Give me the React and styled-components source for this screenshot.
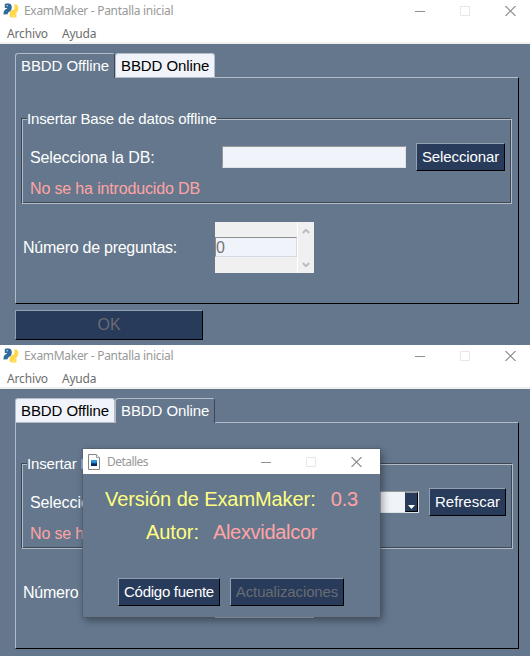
import React from "react";
import styled, { createGlobalStyle } from "styled-components";

const slate = "#64778d";
const field = "#f0f3f9";
const navy = "#283b5b";
const light = "#b2bbc6";
const dark = "#3d4854";

const GlobalStyle = createGlobalStyle`
  *, *::before, *::after { box-sizing: border-box; }
  body {
    margin: 0;
    background: #fff;
    overflow: hidden;
    font-family: "Liberation Sans", Arial, sans-serif;
  }
`;

const Screen = styled.main`
  position: relative;
  width: 530px;
  height: 657px;
  overflow: hidden;
`;

const WindowFrame = styled.section`
  display: flex;
  flex-direction: column;
  height: ${(p) => p.$height}px;
  overflow: hidden;
  background: ${slate};
`;

const Header = styled.header`
  flex: none;
  height: 44px;
  background: #fff;
  border-bottom: 2px solid #f0f0f0;
  font-family: "Noto Sans", sans-serif;
  white-space: nowrap;
`;

const TitleBar = styled.div`
  display: flex;
  align-items: center;
  height: ${(p) => p.$height}px;
  padding-left: ${(p) => p.$left}px;
  background: #fff;
`;

const Title = styled.span`
  flex: 1;
  margin-left: ${(p) => p.$gap}px;
  font: 12px/16px "Noto Sans", sans-serif;
  letter-spacing: ${(p) => p.$spacing}px;
  color: #999;
`;

const Controls = styled.div`
  display: flex;
  align-items: center;
  gap: 35px;
  padding-right: ${(p) => p.$right}px;
  svg { display: block; }
`;

const MenuBar = styled.nav`
  display: flex;
  gap: 14px;
  padding-left: 7px;
  height: 20px;
  font-size: 12px;
  line-height: 24px;
  color: #6d6d6d;
`;

const MenuItem = styled.span`
  letter-spacing: ${(p) => p.$spacing}px;
`;

const Body = styled.div`
  padding: 9px 11px 0 15px;
`;

const TabStrip = styled.div`
  display: flex;
  height: 25px;
`;

const Tab = styled.div`
  position: relative;
  width: 100px;
  height: ${(p) => (p.$active ? 25 : 24)}px;
  padding-left: 5px;
  border: 1px solid ${light};
  border-right-color: ${(p) => (p.$active ? dark : light)};
  border-bottom: 0;
  border-radius: 3px 3px 0 0;
  background: ${(p) => (p.$active ? slate : field)};
  color: ${(p) => (p.$active ? "#fff" : "#000")};
  font-size: 15px;
  line-height: 24px;
  letter-spacing: -0.08px;
  white-space: nowrap;
  z-index: 1;
`;

const Pane = styled.div`
  width: 504px;
  height: 227px;
  margin-top: -1px;
  padding: 40px 0 0 5px;
  border: 1px solid;
  border-color: ${light} #000 #000 ${light};
`;

const Group = styled.div`
  width: ${(p) => p.$width}px;
  height: 86px;
  border: 1px solid;
  border-color: ${dark} ${light} ${light} ${dark};
  box-shadow: inset 1px 1px ${light}, inset -1px -1px ${dark};
`;

const Legend = styled.div`
  width: max-content;
  height: 18px;
  margin: -9px 0 0 5px;
  background: ${slate};
  color: #fff;
  font-size: 15px;
  line-height: 18px;
  letter-spacing: -0.17px;
  white-space: nowrap;
`;

const FieldRow = styled.div`
  display: flex;
  align-items: center;
  height: 28px;
  margin-top: 15px;
  padding-left: 8px;
`;

const Label = styled.span`
  width: ${(p) => p.$width}px;
  padding-top: ${(p) => p.$drop || 0}px;
  font-size: 16px;
  line-height: 20px;
  letter-spacing: ${(p) => p.$spacing}px;
  color: #fff;
  white-space: nowrap;
`;

const Warning = styled.div`
  margin: 8px 0 0 8px;
  font-size: 16px;
  line-height: 20px;
  letter-spacing: -0.15px;
  color: #ffa4a4;
`;

const Entry = styled.div`
  display: flex;
  justify-content: flex-end;
  width: ${(p) => p.$width}px;
  height: 22px;
  margin-right: 10px;
  border: 1px solid;
  border-color: #969696 #dfe3e6 #dfe3e6 #969696;
  background: ${field};
`;

const DropButton = styled.div`
  display: flex;
  align-items: flex-end;
  justify-content: center;
  width: 13px;
  height: 20px;
  padding-bottom: 2px;
  border: 1px solid;
  border-color: #93a0b0 #000 #000 ${navy};
  background: ${navy};
`;

const Button = styled.button`
  display: block;
  flex: none;
  width: ${(p) => p.$width}px;
  height: ${(p) => p.$height || 28}px;
  padding: 0;
  border: 1px solid;
  border-color: #93a0b0 #000 #000 #93a0b0;
  border-radius: 0;
  background: ${navy};
  color: ${(p) => (p.$muted ? "#696c72" : "#fff")};
  font: ${(p) => p.$size || 15}px/20px "Liberation Sans", Arial, sans-serif;
  letter-spacing: ${(p) => p.$spacing || 0}px;
  white-space: nowrap;
`;

const CountRow = styled.div`
  display: flex;
  align-items: center;
  height: 51px;
  margin-top: 18px;
  padding-left: 2px;
`;

const Spinner = styled.div`
  display: flex;
  width: 99px;
  height: 51px;
  background: #f0f0f0;
`;

const SpinValue = styled.div`
  width: 82px;
  height: 20px;
  margin-top: 15px;
  border: 1px solid;
  border-color: #8d8f93 #d4dae2 #d4dae2 #8d8f93;
  background: ${field};
  color: #747474;
  font-size: 16px;
  line-height: 19px;
`;

const SpinArrows = styled.div`
  display: flex;
  flex-direction: column;
  justify-content: space-between;
  align-items: center;
  flex: 1;
  padding: 6px 0 5px;
  border-left: 1px solid #fff;
  svg { display: block; }
`;

const Confirm = styled.div`
  margin-top: 6px;
`;

const Dialog = styled.div`
  position: absolute;
  z-index: 3;
  left: 83px;
  top: 449px;
  width: 297px;
  height: 168px;
  background: ${slate};
  box-shadow: 0 0 0 1px rgba(80, 84, 94, 0.45), 2px 3px 8px rgba(0, 0, 0, 0.42);
`;

const InfoLine = styled.div`
  display: flex;
  gap: ${(p) => p.$gap}px;
  height: 33px;
  padding-left: ${(p) => p.$left}px;
  font-size: 20px;
  line-height: 33px;
  white-space: nowrap;
`;

const InfoName = styled.span`
  color: #ffff80;
  letter-spacing: -0.08px;
`;

const InfoValue = styled.span`
  color: #ffa4a4;
  letter-spacing: ${(p) => p.$spacing}px;
`;

const DialogContent = styled.div`
  padding-top: 9px;
`;

const DialogButtons = styled.div`
  display: flex;
  gap: 10px;
  padding: 29px 0 0 35px;
`;

function SnakeIcon() {
  return (
    <svg width="16" height="16" viewBox="0 0 16 16" fill="none" strokeLinejoin="round">
      <path d="M1.8 2.9H6.4Q7.2 6.4 4.8 7.4Q2.3 8.4 2.6 11.4" stroke="#2f6c9b" strokeWidth="4.2" />
      <path d="M3 3Q6.3 2 6.3 4.5" stroke="#2f6c9b" strokeWidth="4.4" />
      <path d="M11.5 3Q13.7 3.2 13.2 6.3Q12.9 8.2 10.6 8.7Q8.2 9.3 8.6 12.6H13.4" stroke="#ffd748" strokeWidth="4" />
      <circle cx="4.2" cy="2.7" r=".7" fill="#d9e7ef" />
      <circle cx="10.7" cy="13" r=".7" fill="#fff8d5" />
    </svg>
  );
}

function DocumentIcon() {
  return (
    <svg width="12" height="16" viewBox="0 0 12 16">
      <path d="M.5.5H8.5L11.5 3.5V15.5H.5Z" fill="#fafafa" stroke="#858585" />
      <path d="M8.5.5V3.5H11.5" fill="#fff" stroke="#9a9a9a" />
      <path d="M3 6H9V12H3Z" fill="#1763b3" />
      <path d="M3 6H9V8L6 9L3 8Z" fill="#2c98df" />
      <path d="M3 10L5 9L7 10L9 9V12H3Z" fill="#092c61" />
    </svg>
  );
}

function WindowControls({ right }) {
  return (
    <Controls $right={right}>
      <svg width="10" height="10"><path d="M0 5.5H10" stroke="#8f8f8f" /></svg>
      <svg width="10" height="10"><path d="M.5.5H9.5V9.5H.5Z" fill="none" stroke="#e7e7e7" /></svg>
      <svg width="11" height="10"><path d="M.5 0L10.5 10M10.5 0L.5 10" stroke="#8b8b8b" strokeWidth="1.1" /></svg>
    </Controls>
  );
}

function ExamWindow({ online, height }) {
  return (
    <WindowFrame $height={height}>
      <Header>
        <TitleBar $height={22} $left={3}>
          <SnakeIcon />
          <Title $gap={5} $spacing={-0.3}>ExamMaker - Pantalla inicial</Title>
          <WindowControls right={14} />
        </TitleBar>
        <MenuBar>
          <MenuItem $spacing={-0.15}>Archivo</MenuItem>
          <MenuItem $spacing={-0.2}>Ayuda</MenuItem>
        </MenuBar>
      </Header>
      <Body>
        <TabStrip>
          <Tab $active={!online}>BBDD Offline</Tab>
          <Tab $active={online}>BBDD Online</Tab>
        </TabStrip>
        <Pane>
          <Group $width={online ? 492 : 491}>
            <Legend>Insertar Base de datos {online ? "online" : "offline"}</Legend>
            <FieldRow>
              <Label $width={192} $drop={2} $spacing={-0.1}>Selecciona la DB:</Label>
              <Entry $width={online ? 197 : 184}>
                {online && (
                  <DropButton>
                    <svg width="7" height="4"><path d="M0 0H7L3.5 4Z" fill="#fff" /></svg>
                  </DropButton>
                )}
              </Entry>
              <Button $width={online ? 77 : 89} $spacing={online ? 0 : -0.12}>
                {online ? "Refrescar" : "Seleccionar"}
              </Button>
            </FieldRow>
            <Warning>No se ha introducido DB</Warning>
          </Group>
          <CountRow>
            <Label $width={192} $spacing={-0.26}>Número de preguntas:</Label>
            <Spinner>
              <SpinValue>0</SpinValue>
              <SpinArrows>
                <svg width="8" height="6"><path d="M.8 5L4 1.8L7.2 5" fill="none" stroke="#bcbcbc" strokeWidth="2" /></svg>
                <svg width="8" height="6"><path d="M.8 1L4 4.2L7.2 1" fill="none" stroke="#bcbcbc" strokeWidth="2" /></svg>
              </SpinArrows>
            </Spinner>
          </CountRow>
        </Pane>
        {!online && (
          <Confirm>
            <Button $width={188} $height={30} $size={16} $muted>OK</Button>
          </Confirm>
        )}
      </Body>
    </WindowFrame>
  );
}

export default function App() {
  return (
    <Screen>
      <GlobalStyle />
      <ExamWindow height={345} />
      <ExamWindow online height={311} />
      <Dialog>
        <TitleBar $height={25} $left={5}>
          <DocumentIcon />
          <Title $gap={7} $spacing={-0.55}>Detalles</Title>
          <WindowControls right={18} />
        </TitleBar>
        <DialogContent>
          <InfoLine $left={22} $gap={15}>
            <InfoName>Versión de ExamMaker:</InfoName>
            <InfoValue $spacing={-0.1}>0.3</InfoValue>
          </InfoLine>
          <InfoLine $left={63} $gap={14}>
            <InfoName>Autor:</InfoName>
            <InfoValue $spacing={-0.3}>Alexvidalcor</InfoValue>
          </InfoLine>
          <DialogButtons>
            <Button $width={102} $spacing={-0.27}>Código fuente</Button>
            <Button $width={114} $spacing={-0.13} $muted>Actualizaciones</Button>
          </DialogButtons>
        </DialogContent>
      </Dialog>
    </Screen>
  );
}
